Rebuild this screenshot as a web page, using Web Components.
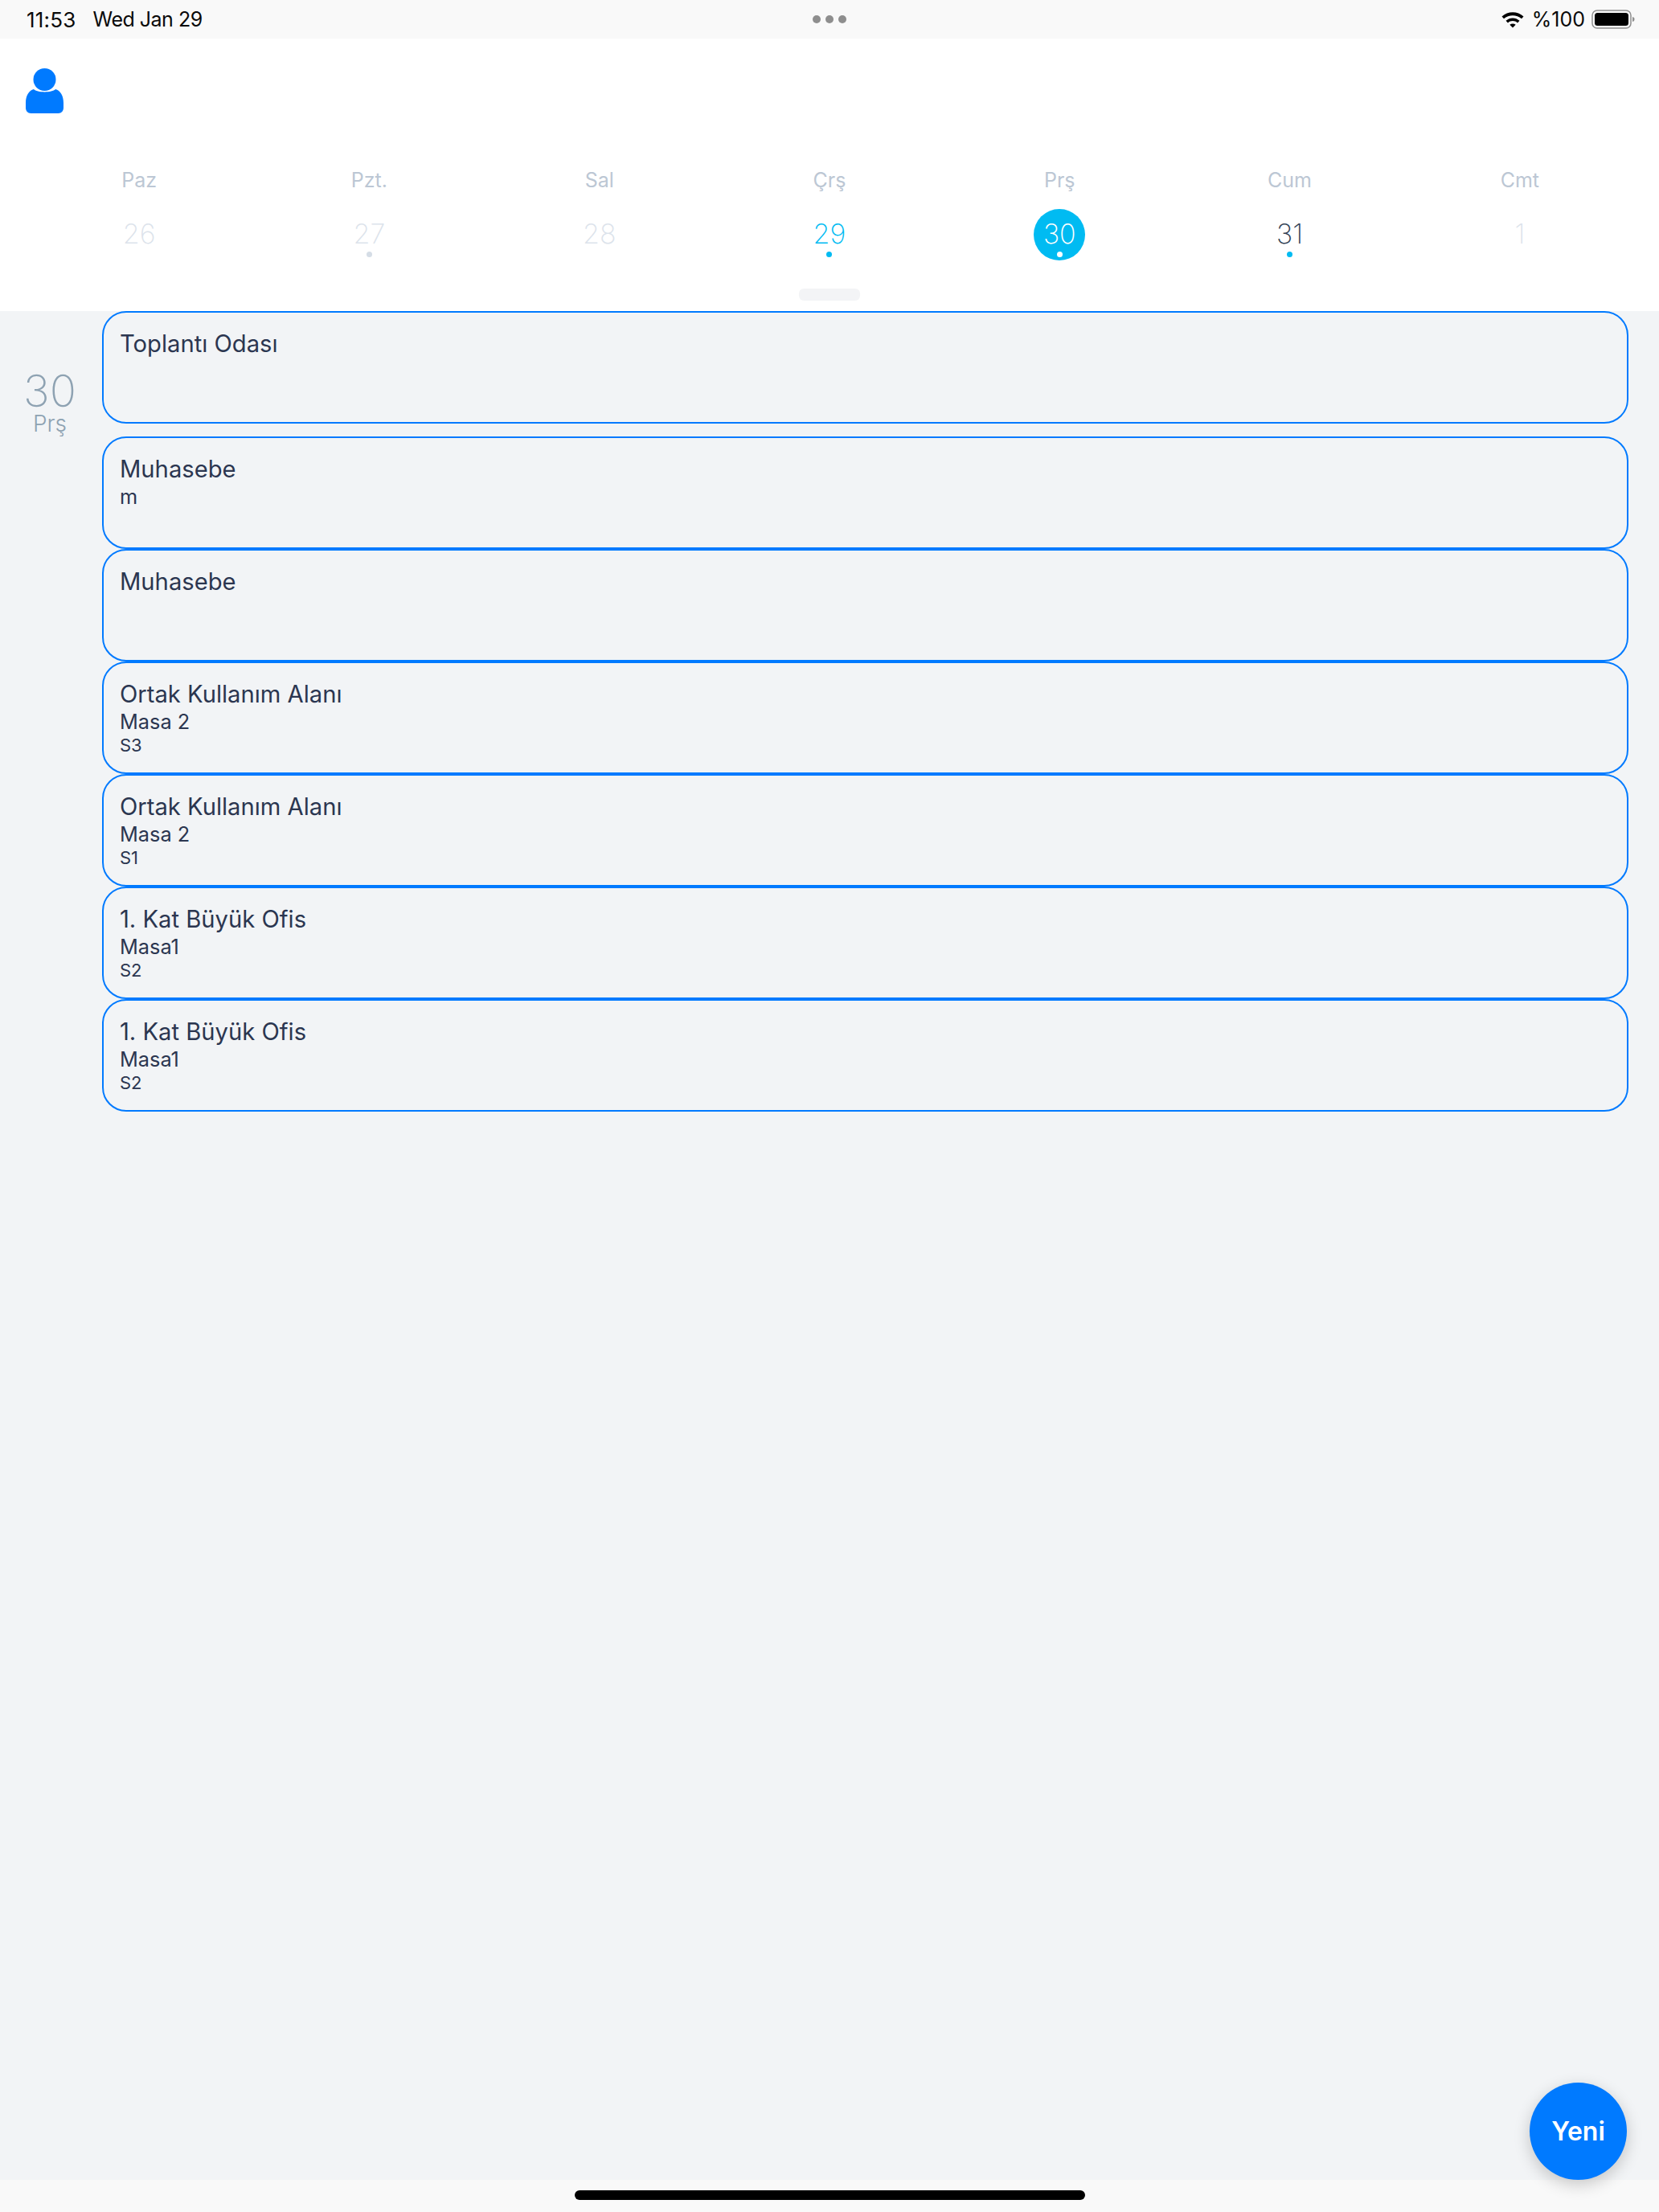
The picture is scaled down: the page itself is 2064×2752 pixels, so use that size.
<!DOCTYPE html>
<html lang="tr">
<head>
<meta charset="utf-8">
<title>Takvim</title>
<style>
  html, body { margin: 0; padding: 0; height: 2752px; background: #f2f4f6; font-family: Inter, "Noto Sans", sans-serif; overflow: hidden; }
  body { display: flex; flex-direction: column; position: relative; }
</style>
</head>
<body>
<status-bar></status-bar>
<week-strip>
  <week-day name="Paz" date="26" state="past"></week-day>
  <week-day name="Pzt." date="27" state="past" dot></week-day>
  <week-day name="Sal" date="28" state="past"></week-day>
  <week-day name="Çrş" date="29" state="today" dot></week-day>
  <week-day name="Prş" date="30" state="selected" dot></week-day>
  <week-day name="Cum" date="31" dot></week-day>
  <week-day name="Cmt" date="1" state="past"></week-day>
</week-strip>
<agenda-day date="30" name="Prş">
  <agenda-card title="Toplantı Odası" class="first"></agenda-card>
  <agenda-card title="Muhasebe" sub="m"></agenda-card>
  <agenda-card title="Muhasebe" flush></agenda-card>
  <agenda-card title="Ortak Kullanım Alanı" sub="Masa 2" note="S3" flush></agenda-card>
  <agenda-card title="Ortak Kullanım Alanı" sub="Masa 2" note="S1" flush></agenda-card>
  <agenda-card title="1. Kat Büyük Ofis" sub="Masa1" note="S2" flush></agenda-card>
  <agenda-card title="1. Kat Büyük Ofis" sub="Masa1" note="S2" flush></agenda-card>
</agenda-day>
<home-bar></home-bar>
<new-button>Yeni</new-button>

<script>
class StatusBar extends HTMLElement {
  constructor() {
    super()
    this.attachShadow({ mode: 'open' })
    this.shadowRoot.innerHTML = `
      <style>
        :host { display: flex; align-items: center; height: 48px; flex: none; background: #f9f9f9; color: #0a0a0a; font-size: 25px; padding: 0 30px 0 33px; box-sizing: border-box; position: relative; }
        .time { font-size: 26px; letter-spacing: .2px; }
        .date { margin-left: 21px; letter-spacing: -.5px; }
        .dots { position: absolute; left: 1011px; top: 19px; display: flex; gap: 6px; }
        .dots i { width: 10px; height: 10px; border-radius: 50%; background: #8e8e8e; }
        .right { margin-left: auto; display: flex; align-items: center; }
        .pct { margin-left: 9px; }
        svg { display: block; }
        .batt { margin-left: 8px; }
      </style>
      <span class="time">11:53</span><span class="date">Wed Jan 29</span>
      <div class="dots"><i></i><i></i><i></i></div>
      <div class="right">
        <svg width="30" height="22" viewBox="0 0 30 22">
          <path d="M1.5 7.5C9 .6 21 .6 28.5 7.5L26 10.2C19.800 4.800 10.200 4.800 4 10.200Z" fill="#000"/>
          <path d="M6.500 12.800C11.500 8.300 18.500 8.300 23.500 12.800L21 15.500C17.300 12.300 12.700 12.300 9 15.500Z" fill="#000"/>
          <path d="M11.300 17.800C13.500 16 16.500 16 18.700 17.800L15 21.500Z" fill="#000"/>
        </svg>
        <span class="pct">%100</span>
        <svg class="batt" width="54" height="26" viewBox="0 0 54 26">
          <rect x="1" y="2" width="48" height="22" rx="6" fill="none" stroke="#8f8f8f" stroke-width="1.500"/>
          <rect x="4" y="5" width="42" height="16" rx="3.500" fill="#000"/>
          <path d="M51 10c2 .5 2.500 1.500 2.500 3s-.5 2.500-2.500 3z" fill="#8f8f8f"/>
        </svg>
      </div>`
  }
}

class WeekStrip extends HTMLElement {
  constructor() {
    super()
    this.attachShadow({ mode: 'open' })
    this.shadowRoot.innerHTML = `
      <style>
        :host { display: block; height: 339px; flex: none; background: #fff; box-sizing: border-box; padding: 37px 30px 0; }
        svg { display: block; margin-left: 2px; }
        .days { display: grid; grid-template-columns: repeat(7, 1fr); margin-top: 67px; }
        .grab { width: 76px; height: 15px; border-radius: 6px; background: #f3f4f6; margin: 35px auto 0; }
      </style>
      <svg width="47" height="56" viewBox="0 0 47 56">
        <circle cx="23.500" cy="14" r="14" fill="#007aff"/>
        <path d="M10 26C14 30.500 33 30.500 37 26C43 27.500 47 34 47 43V49C47 53 44.500 56 40.500 56H6.500C2.500 56 0 53 0 49V43C0 34 4 27.500 10 26Z" fill="#007aff"/>
      </svg>
      <div class="days"><slot></slot></div>
      <div class="grab"></div>`
  }
}

class WeekDay extends HTMLElement {
  constructor() {
    super()
    this.attachShadow({ mode: 'open' })
    const state = this.getAttribute('state') || ''
    this.shadowRoot.innerHTML = `
      <style>
        :host { display: flex; flex-direction: column; align-items: center; }
        .name { font-size: 25px; line-height: 32px; color: #bcc7d4; }
        .cell { position: relative; width: 64px; height: 64px; margin-top: 20px; box-sizing: border-box; padding-bottom: 4px; border-radius: 50%; display: flex; align-items: center; justify-content: center; font-size: 34px; font-weight: 250; color: #334356; }
        .dot { position: absolute; left: 50%; top: 53px; width: 7px; height: 7px; margin-left: -3.500px; border-radius: 50%; background: #00bbf2; }
        .past { color: #dce3eb; }
        .past .dot { background: #d5dde6; }
        .today { color: #00bbf2; }
        .selected { background: #00bbf2; color: #fff; }
        .selected .dot { background: #fff; }
      </style>
      <div class="name">${this.getAttribute('name')}</div>
      <div class="cell ${state}">${this.getAttribute('date')}${this.hasAttribute('dot') ? '<i class="dot"></i>' : ''}</div>`
  }
}

class AgendaDay extends HTMLElement {
  constructor() {
    super()
    this.attachShadow({ mode: 'open' })
    this.shadowRoot.innerHTML = `
      <style>
        :host { display: flex; flex: 1; padding-right: 38px; min-height: 0; }
        .when { width: 124px; margin-right: 3px; flex: none; display: flex; flex-direction: column; align-items: center; padding-top: 72px; color: #8ea2b2; }
        .num { font-size: 55px; font-weight: 200; line-height: 54px; }
        .name { font-size: 28px; font-weight: 300; line-height: 28px; }
        .list { flex: 1; display: flex; flex-direction: column; }
      </style>
      <div class="when"><div class="num">${this.getAttribute('date')}</div><div class="name">${this.getAttribute('name')}</div></div>
      <div class="list"><slot></slot></div>`
  }
}

class AgendaCard extends HTMLElement {
  constructor() {
    super()
    this.attachShadow({ mode: 'open' })
    const sub = this.getAttribute('sub')
    const note = this.getAttribute('note')
    this.shadowRoot.innerHTML = `
      <style>
        :host { display: block; height: 140px; box-sizing: border-box; border: 2px solid #007aff; border-radius: 30px; padding: 19px 20px 0; color: #2b3650; margin-top: 16px; }
        :host([flush]) { margin-top: 0; }
        :host(.first) { margin-top: 0; }
        .title { font-size: 29.2px; line-height: 40px; }
        .sub { font-size: 25.3px; line-height: 27px; }
        .note { font-size: 22px; line-height: 28px; margin-top: 2px; }
      </style>
      <div class="title">${this.getAttribute('title')}</div>
      ${sub ? `<div class="sub">${sub}</div>` : ''}
      ${note ? `<div class="note">${note}</div>` : ''}`
  }
}

class HomeBar extends HTMLElement {
  constructor() {
    super()
    this.attachShadow({ mode: 'open' })
    this.shadowRoot.innerHTML = `
      <style>
        :host { display: flex; justify-content: center; height: 40px; flex: none; background: #f9f9f9; padding-top: 13px; box-sizing: border-box; }
        div { width: 635px; height: 12px; border-radius: 6px; background: #000; }
      </style>
      <div></div>`
  }
}

class NewButton extends HTMLElement {
  constructor() {
    super()
    this.attachShadow({ mode: 'open' })
    this.shadowRoot.innerHTML = `
      <style>
        :host { position: absolute; left: 1903px; top: 2591px; width: 121px; height: 121px; border-radius: 50%; background: #007aff; color: #fff; font-size: 32px; font-weight: 600; display: flex; align-items: center; justify-content: center; box-shadow: 0 6px 20px rgba(0,0,0,.2); }
      </style>
      <slot></slot>`
  }
}

window.customElements.define('status-bar', StatusBar)
window.customElements.define('week-strip', WeekStrip)
window.customElements.define('week-day', WeekDay)
window.customElements.define('agenda-day', AgendaDay)
window.customElements.define('agenda-card', AgendaCard)
window.customElements.define('home-bar', HomeBar)
window.customElements.define('new-button', NewButton)
</script>
</body>
</html>
